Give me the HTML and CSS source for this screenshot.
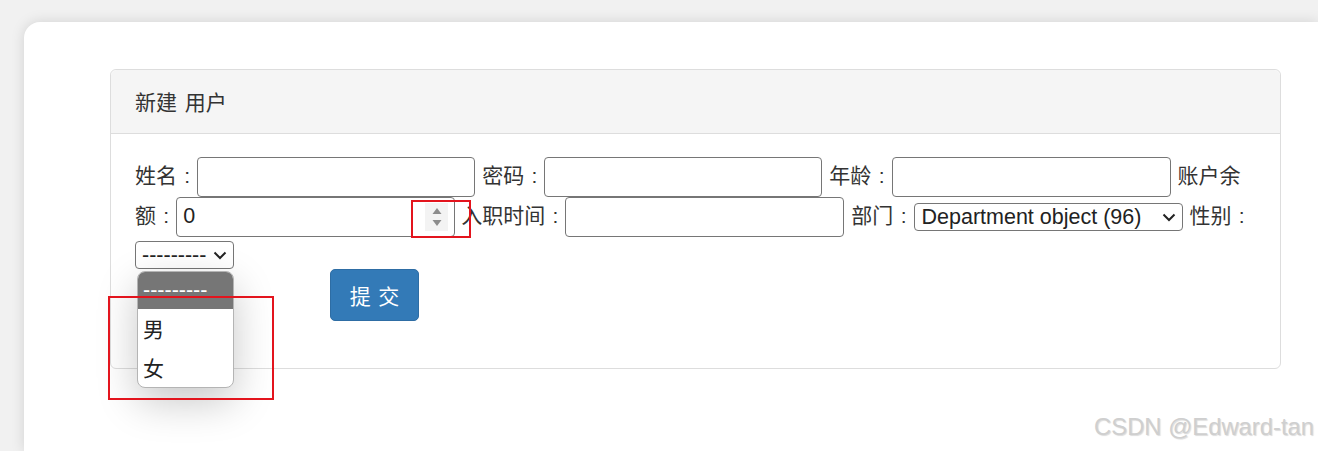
FILE: index.html
```html
<!DOCTYPE html>
<html lang="zh-CN">
<head>
<meta charset="utf-8">
<title>新建 用户</title>
<link rel="stylesheet" href="styles.css">
</head>
<body>
<div class="page">
  <div class="panel">
    <div class="panel-heading"><span class="title">新建 用户</span></div>
    <div class="panel-body">
      <form class="form">
        <p class="fields"><label class="lbl">姓名 :</label><wbr><input class="txt" type="text"><label class="lbl">密码 :</label><wbr><input class="txt" type="password"><label class="lbl">年龄 :</label><wbr><input class="txt w279" type="text"><span class="lbl-part">账户余</span><wbr><label class="lbl">额 :</label><wbr><span class="numbox"><span class="numval">0</span><span class="spin"><svg width="10" height="20" viewBox="0 0 10 20"><path d="M5 1 L9.5 7 L0.5 7 Z" fill="#8c8c8c"/><path d="M0.5 13 L9.5 13 L5 19 Z" fill="#8c8c8c"/></svg></span></span><label class="lbl">入职时间 :</label><wbr><input class="txt w279" type="text"><label class="lbl">部门 :</label><wbr><select class="sel dept"><option>Department object (96)</option></select><label class="lbl">性别 :</label><wbr><select class="sel gender"><option>---------</option><option>男</option><option>女</option></select></p>
        <button class="btn" type="button">提 交</button>
      </form>
    </div>
  </div>
</div>
<ul class="dropdown">
  <li class="opt active">---------</li>
  <li class="opt">男</li>
  <li class="opt">女</li>
</ul>
<div class="mark mark-spin"></div>
<div class="mark mark-drop"></div>
<div class="watermark">CSDN @Edward-tan</div>
</body>
</html>
```
FILE: styles.css
```css
html, body {
  margin: 0;
  padding: 0;
}
body {
  position: relative;
  width: 1318px;
  height: 451px;
  overflow: hidden;
  background: #f1f1f1;
  font-family: "Noto Sans CJK SC", "Liberation Sans", sans-serif;
  color: #333;
}
.page {
  margin: 22px 0 0 24px;
  width: 1294px;
  height: 429px;
  box-sizing: border-box;
  padding: 47px 0 0 86px;
  background: #fff;
  border-radius: 16px 0 0 0;
  box-shadow: 0 0 14px rgba(0, 0, 0, 0.13);
}
.panel {
  width: 1171px;
  box-sizing: border-box;
  border: 1px solid #dddddd;
  border-radius: 6px;
  background: #fff;
}
.panel-heading {
  height: 63px;
  line-height: 63px;
  padding: 0 24px;
  background: #f5f5f5;
  border-bottom: 1px solid #dddddd;
  border-radius: 6px 6px 0 0;
  font-size: 21px;
  word-spacing: 3px;
}
.panel-body {
  padding: 23px 23px 23px 24px;
}
.form {
  margin: 0;
}
.fields {
  margin: 0;
  font-size: 21px;
  line-height: 30px;
}
.lbl {
  font-family: "Liberation Sans", "Noto Sans CJK SC", sans-serif;
  word-spacing: 1.5px;
  padding-right: 7px;
  color: #333;
}
.lbl-part {
  color: #333;
}
.txt {
  box-sizing: border-box;
  width: 278px;
  height: 40px;
  margin: 0 7px 0 0;
  padding: 0 5px;
  border: 1px solid #767676;
  border-radius: 4px;
  vertical-align: middle;
  font-family: "Liberation Sans", sans-serif;
  font-size: 21px;
  background: #fff;
}
.w279 {
  width: 279px;
}
.numbox {
  display: inline-flex;
  align-items: center;
  box-sizing: border-box;
  width: 279px;
  height: 40px;
  margin-right: 6px;
  border: 1px solid #767676;
  border-radius: 4px;
  vertical-align: middle;
  line-height: 1;
}
.numval {
  flex: 1;
  padding-left: 6px;
  font-family: "Liberation Sans", sans-serif;
  font-size: 21.5px;
  color: #222;
}
.spin {
  display: flex;
  align-items: center;
  justify-content: center;
  width: 23px;
  height: 28px;
  margin-right: 6px;
  background: #f3f3f3;
}
.sel {
  box-sizing: border-box;
  height: 28px;
  margin: 0 7px 0 0;
  padding: 0 30px 0 7px;
  border: 1px solid #767676;
  border-radius: 4px;
  vertical-align: middle;
  font-family: "Liberation Sans", sans-serif;
  font-size: 21.5px;
  line-height: 26px;
  color: #222;
  -webkit-appearance: none;
  appearance: none;
  background-color: #fff;
  background-image: url("data:image/svg+xml,%3Csvg xmlns='http://www.w3.org/2000/svg' width='14' height='9' viewBox='0 0 14 9'%3E%3Cpath d='M1.5 1.5 L7 7 L12.5 1.5' fill='none' stroke='%23222' stroke-width='2'/%3E%3C/svg%3E");
  background-repeat: no-repeat;
  background-position: right 6px center;
}
.dept {
  width: 269px;
}
.gender {
  width: 99px;
  padding: 0 20px 0 6px;
  text-overflow: clip;
}
.btn {
  display: block;
  box-sizing: border-box;
  width: 89px;
  height: 52px;
  margin: 0 0 24px 195px;
  padding: 0;
  border: 1px solid #2e6da4;
  border-radius: 5px;
  background: #337ab7;
  color: #fff;
  font-family: "Noto Sans CJK SC", sans-serif;
  font-size: 21px;
  word-spacing: 3px;
}
.dropdown {
  position: absolute;
  left: 137px;
  top: 271px;
  width: 97px;
  margin: 0;
  padding: 0;
  list-style: none;
  box-sizing: border-box;
  border: 1px solid #b4b4b4;
  border-radius: 8px;
  background: #fff;
  overflow: hidden;
  box-shadow: 0 14px 40px rgba(0, 0, 0, 0.22);
}
.opt {
  height: 39px;
  line-height: 39px;
  padding-left: 5px;
  font-size: 21px;
  color: #222;
}
.opt.active {
  height: 37px;
  line-height: 37px;
  background: #767676;
  color: #fff;
  font-family: "Liberation Sans", sans-serif;
  font-size: 21.5px;
}
.mark {
  position: absolute;
  box-sizing: border-box;
  border: 2px solid #e3141d;
}
.mark-spin {
  left: 411px;
  top: 200px;
  width: 60px;
  height: 38px;
}
.mark-drop {
  left: 108px;
  top: 296px;
  width: 166px;
  height: 104px;
}
.watermark {
  position: absolute;
  right: 4px;
  top: 415px;
  font-family: "Liberation Sans", sans-serif;
  font-size: 23.8px;
  line-height: 1;
  color: #cfcfcf;
  text-shadow: 1px 1px 1px rgba(0, 0, 0, 0.14);
}
```
